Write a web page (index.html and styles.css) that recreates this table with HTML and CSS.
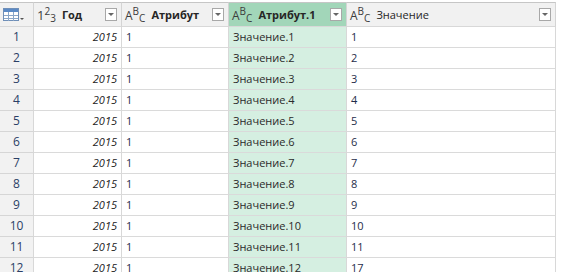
FILE: index.html
```html
<!DOCTYPE html>
<html lang="ru">
<head>
<meta charset="utf-8">
<link rel="stylesheet" href="styles.css">
</head>
<body>
<div class="topstrip"></div>
<div class="grid">
  <div class="hcell corner">
    <svg width="22" height="14" viewBox="0 0 22 14">
      <rect x="0.5" y="0.5" width="15" height="12" fill="#fff" stroke="#6f8fb8"/>
      <rect x="1" y="1" width="14" height="3" fill="#5b8ac6"/>
      <path d="M1 7.5H15M1 10.5H15M5.5 4V13M10.5 4V13" stroke="#8aa6c8" stroke-width="1"/>
      <path d="M17 10H21L19 12Z" fill="#555"/>
    </svg>
  </div>
  <div class="hcell"><span class="ti"><span class="b">1</span><span class="sup">2</span><span class="sub">3</span></span><span class="hname bold">Год</span><span class="fb"></span></div>
  <div class="hcell"><span class="ti"><span class="b s">A</span><span class="sup">B</span><span class="sub">C</span></span><span class="hname bold">Атрибут</span><span class="fb"></span></div>
  <div class="hcell sel"><span class="ti"><span class="b s">A</span><span class="sup">B</span><span class="sub">C</span></span><span class="hname bold">Атрибут.1</span><span class="fb"></span></div>
  <div class="hcell"><span class="ti"><span class="b s">A</span><span class="sup">B</span><span class="sub">C</span></span><span class="hname">Значение</span><span class="fb"></span></div>
</div>
<div class="grid body" id="rows"></div>
<script src="app.js"></script>
</body>
</html>
```

FILE: app.js
```js
const rows = document.getElementById('rows');
const vals = [1,2,3,4,5,6,7,8,9,10,11,17];
let html = '';
for (let i = 1; i <= 12; i++) {
  html += '<div class="cell num">' + i + '</div>' +
    '<div class="cell year">2015</div>' +
    '<div class="cell">1</div>' +
    '<div class="cell green">Значение.' + i + '</div>' +
    '<div class="cell">' + vals[i-1] + '</div>';
}
rows.innerHTML = html;
```

FILE: styles.css
```css
html, body {
  margin: 0;
  padding: 0;
  background: #fff;
  overflow: hidden;
}
body {
  font-family: "Open Sans", "Noto Sans", sans-serif;
  font-size: 11px;
  color: #252525;
}
.topstrip {
  height: 2px;
  width: 556px;
}
.grid {
  display: grid;
  grid-template-columns: 34px 88px 107px 118px 209px;
  width: 556px;
}
.hcell {
  box-sizing: border-box;
  height: 25px;
  background: #f1f1f1;
  border-top: 1px solid #c6c6c6;
  border-bottom: 1px solid #d8d8d8;
  border-right: 1px solid #d4d4d4;
  display: flex;
  align-items: center;
  padding: 0 4px 0 3px;
}
.hcell.corner {
  padding-left: 3px;
}
.hcell.sel {
  background: #a2d6b9;
}
.ti {
  display: inline-flex;
  align-items: flex-start;
  color: #3c3c3c;
  height: 17px;
  font-family: "Open Sans", sans-serif;
  margin-right: 6px;
}
.ti .b {
  font-size: 13px;
  line-height: 17px;
  margin-top: 1px;
}
.ti .b.s {
  font-size: 12px;
}
.ti .sup {
  font-size: 10px;
  line-height: 10px;
  margin-top: 0;
}
.ti .sub {
  font-size: 10px;
  line-height: 10px;
  margin-top: 7px;
}
.hname {
  flex: 1;
  color: #262626;
}
.bold {
  font-weight: 700;
}
.fb {
  box-sizing: border-box;
  width: 12px;
  height: 13px;
  border: 1px solid #a8a8a8;
  background: #fff;
  position: relative;
}
.fb::after {
  content: "";
  position: absolute;
  left: 2px;
  top: 4px;
  border-left: 3px solid transparent;
  border-right: 3px solid transparent;
  border-top: 3px solid #666;
}
.cell {
  box-sizing: border-box;
  height: 21px;
  border-bottom: 1px solid #dadada;
  border-right: 1px solid #d8d8d8;
  padding: 0 4px;
  line-height: 20px;
  white-space: nowrap;
  overflow: hidden;
  color: #1f2d4a;
}
.cell.num {
  background: #f2f2f2;
  text-align: center;
  color: #2b3f66;
  font-size: 12px;
  border-bottom-color: #d6d6d6;
}
.cell.year {
  text-align: right;
  font-style: italic;
  color: #222;
}
.cell.green {
  background: #d5efe1;
  color: #2a2a2a;
}
```
